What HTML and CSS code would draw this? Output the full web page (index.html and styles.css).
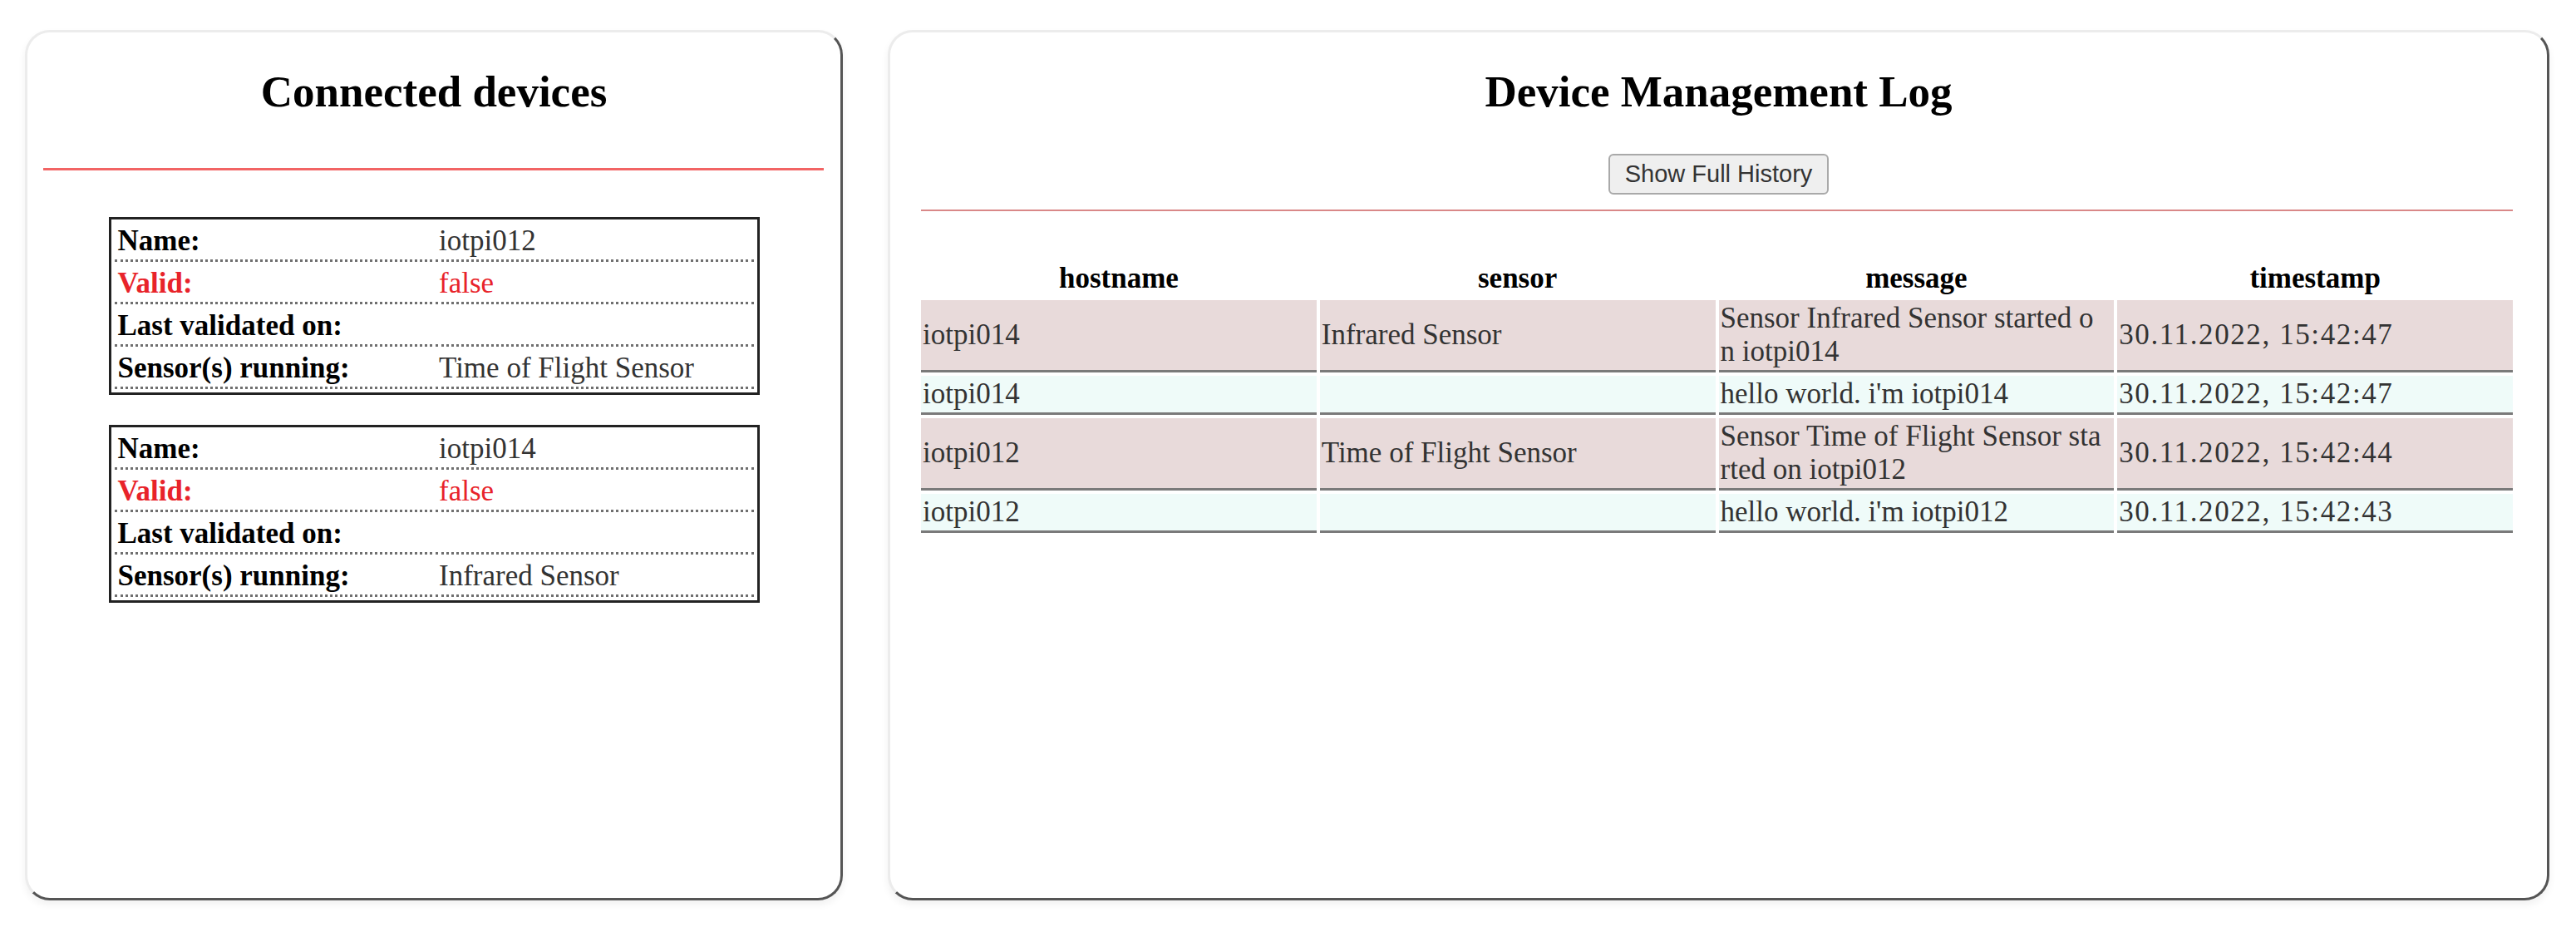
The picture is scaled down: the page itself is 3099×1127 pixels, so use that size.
FILE: index.html
```html
<!DOCTYPE html>
<html lang="en">
<head>
    <meta charset="UTF-8">
    <meta name="viewport" content="width=device-width, initial-scale=1.0">
    <title>Device Management</title>
    <link rel="stylesheet" href="styles.css">
</head>
<body>

<div class="panel devices-panel">
    <h2>Connected devices</h2>
    <hr class="red-line">

    <table class="device">
        <tr><td class="label">Name:</td><td>iotpi012</td></tr>
        <tr class="invalid"><td class="label">Valid:</td><td>false</td></tr>
        <tr><td class="label">Last validated on:</td><td></td></tr>
        <tr><td class="label">Sensor(s) running:</td><td>Time of Flight Sensor</td></tr>
    </table>

    <table class="device">
        <tr><td class="label">Name:</td><td>iotpi014</td></tr>
        <tr class="invalid"><td class="label">Valid:</td><td>false</td></tr>
        <tr><td class="label">Last validated on:</td><td></td></tr>
        <tr><td class="label">Sensor(s) running:</td><td>Infrared Sensor</td></tr>
    </table>
</div>

<div class="panel log-panel">
    <h2>Device Management Log</h2>
    <div class="history">
        <button class="history-btn">Show Full History</button>
    </div>

    <div class="log-body">
        <hr class="log-line">

        <table class="log">
            <thead>
                <tr><th>hostname</th><th>sensor</th><th>message</th><th>timestamp</th></tr>
            </thead>
            <tbody>
                <tr class="sensor-event">
                    <td>iotpi014</td>
                    <td>Infrared Sensor</td>
                    <td class="message">Sensor Infrared Sensor started o<br>n iotpi014</td>
                    <td class="time">30.11.2022, 15:42:47</td>
                </tr>
                <tr class="hello">
                    <td>iotpi014</td>
                    <td></td>
                    <td class="message">hello world. i'm iotpi014</td>
                    <td class="time">30.11.2022, 15:42:47</td>
                </tr>
                <tr class="sensor-event">
                    <td>iotpi012</td>
                    <td>Time of Flight Sensor</td>
                    <td class="message">Sensor Time of Flight Sensor started on iotpi012</td>
                    <td class="time">30.11.2022, 15:42:44</td>
                </tr>
                <tr class="hello">
                    <td>iotpi012</td>
                    <td></td>
                    <td class="message">hello world. i'm iotpi012</td>
                    <td class="time">30.11.2022, 15:42:43</td>
                </tr>
            </tbody>
        </table>
    </div>
</div>

</body>
</html>
```

FILE: styles.css
```css
html, body {
    margin: 0;
}

body {
    padding: 36px 32px 44px 30px;
    display: flex;
    gap: 54px;
    height: 1127px;
    box-sizing: border-box;
    font-family: "Liberation Serif", "Times New Roman", serif;
    font-size: 35px;
    line-height: 40px;
    color: #333;
    background-color: #fff;
}

.panel {
    box-sizing: border-box;
    height: 1047px;
    border: 3px solid;
    border-color: #ececec #555 #555 #ececec;
    border-radius: 30px;
    box-shadow: 0 5px 10px rgba(0, 0, 0, 0.06);
    background-color: #fff;
}

.devices-panel {
    width: 984px;
    flex: none;
}

.log-panel {
    flex: 1;
}

.panel h2 {
    margin: 41px 0 0;
    font-size: 53px;
    line-height: 61px;
    font-weight: bold;
    text-align: center;
    color: #000;
}

.red-line {
    margin: 61px 20px 0 19px;
    height: 0;
    border: none;
    border-top: 3px solid #f26464;
}

/* device cards */
.device {
    width: 783px;
    margin: 56px auto 0;
    border: 3px solid #222;
    border-spacing: 4px;
    table-layout: fixed;
}

.device + .device {
    margin-top: 36px;
}

.device td {
    width: 50%;
    padding: 2px 4px;
    border-bottom: 3px dotted #6f6f6f;
}

.device td.label {
    font-weight: bold;
    color: #000;
}

.device tr.invalid td {
    color: #e8232a;
}

/* log */
.history {
    margin-top: 44px;
    text-align: center;
}

.history-btn {
    height: 49px;
    padding: 0 18px;
    font-family: "Liberation Sans", Arial, sans-serif;
    font-size: 29px;
    color: #333;
    background-color: #efefef;
    border: 2px solid #a9a9a9;
    border-radius: 6px;
    cursor: pointer;
}

.log-body {
    padding: 0 41px 0 37px;
}

.log-line {
    margin: 18px 0 0;
    height: 0;
    border: none;
    border-top: 2px solid #d98888;
}

.log {
    width: calc(100% + 8px);
    margin: 55px -4px 0;
    border-spacing: 4px;
    table-layout: fixed;
}

.log th {
    padding: 2px;
    font-weight: bold;
    color: #000;
    text-align: center;
}

.log td {
    padding: 2px 6px 2px 2px;
    border-bottom: 3px solid #7a7a7a;
    text-align: left;
}

.log td.message {
    word-break: break-all;
}

.log td.time {
    letter-spacing: 1.6px;
}

.log tr.sensor-event td {
    background-color: #e8dada;
}

.log tr.hello td {
    background-color: #effbf9;
}
```
